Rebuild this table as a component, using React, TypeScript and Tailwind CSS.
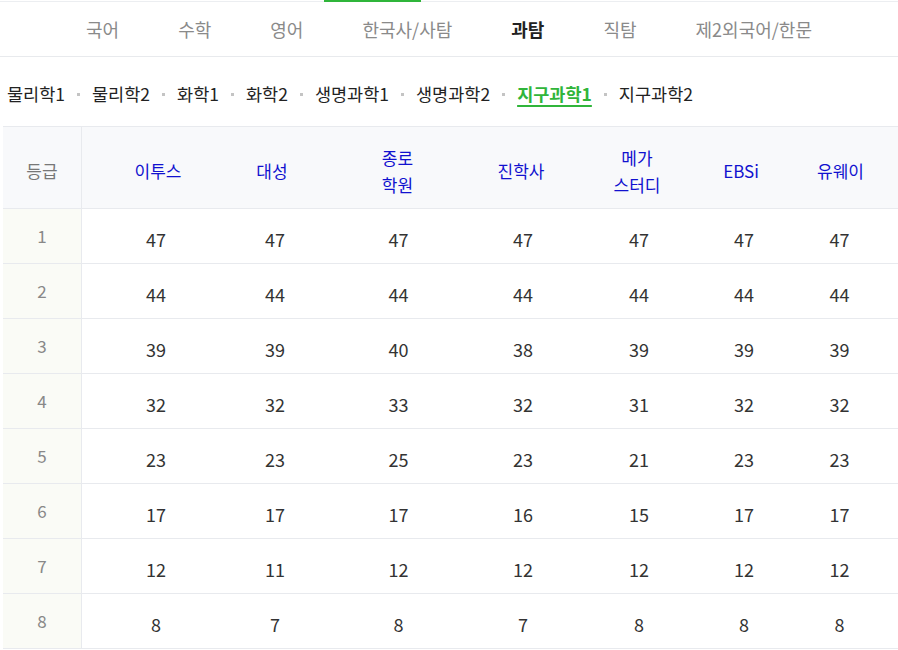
import React from 'react';

const tabs = ['국어', '수학', '영어', '한국사/사탐', '과탐', '직탐', '제2외국어/한문'];
const activeTab = '과탐';

const subjects = ['물리학1', '물리학2', '화학1', '화학2', '생명과학1', '생명과학2', '지구과학1', '지구과학2'];
const activeSubject = '지구과학1';

const headers: { lines: string[]; cls: string }[] = [
  { lines: ['이투스'], cls: 'pl-[20px]' },
  { lines: ['대성'], cls: 'pr-[4px]' },
  { lines: ['종로', '학원'], cls: 'pl-[2px]' },
  { lines: ['진학사'], cls: 'pl-[4px]' },
  { lines: ['메가', '스터디'], cls: 'pl-[6px]' },
  { lines: ['EBSi'], cls: 'pl-[2px]' },
  { lines: ['유웨이'], cls: 'pr-[8px]' },
];

const rows: number[][] = [
  [47, 47, 47, 47, 47, 47, 47],
  [44, 44, 44, 44, 44, 44, 44],
  [39, 39, 40, 38, 39, 39, 39],
  [32, 32, 33, 32, 31, 32, 32],
  [23, 23, 25, 23, 21, 23, 23],
  [17, 17, 17, 16, 15, 17, 17],
  [12, 11, 12, 12, 12, 12, 12],
  [8, 7, 8, 7, 8, 8, 8],
];

// per-column nudges so numbers sit where the header does
const cellShift = ['pl-[16px]', 'pl-[2px]', 'pl-[4px]', 'pl-[8px]', 'pl-[10px]', 'pl-[8px]', 'pr-[10px]'];

const font = 'font-["Noto_Sans_CJK_KR","Noto_Sans",sans-serif]';

export default function App() {
  return (
    <div className={`w-[898px] h-[650px] bg-white overflow-hidden ${font}`}>
      {/* outer indicator strip */}
      <div className="h-[2px] border-b border-[#eceef1]">
        <div className="ml-[324px] w-[97px] h-[2px] bg-[#2fb53a]" />
      </div>

      {/* main tabs */}
      <div className="h-[55px] flex items-center justify-center gap-[59px] border-b border-[#e8eaed]">
        {tabs.map((t) => (
          <span
            key={t}
            className={
              t === activeTab
                ? 'text-[18px] font-bold text-[#222]'
                : 'text-[18px] text-[#8a8a8a]'
            }
          >
            {t}
          </span>
        ))}
      </div>

      {/* subject list */}
      <div className="h-[69px] flex items-center pl-[7px] pt-[6px]">
        {subjects.map((s, i) => (
          <React.Fragment key={s}>
            {i > 0 && <span className="mx-[12px] w-[3px] h-[3px] bg-[#c4c4c4]" />}
            <span
              className={
                s === activeSubject
                  ? 'text-[17.5px] font-bold text-[#30b53a] underline underline-offset-[4px] decoration-2'
                  : 'text-[17.5px] text-[#222]'
              }
            >
              {s}
            </span>
          </React.Fragment>
        ))}
      </div>

      {/* score table */}
      <div className="ml-[3px] border-t border-[#e8eaee]">
        <div className="grid grid-cols-[79px_132px_120px_125px_120px_110px_102px_107px]">
          <div className="h-[82px] bg-[#f8f9fb] border-r border-b border-[#e8eaee] flex items-center justify-center pt-[6px] text-[17px] text-[#777]">
            등급
          </div>
          {headers.map((h) => (
            <div
              key={h.lines.join('')}
              className={`h-[82px] bg-[#f8f9fb] border-b border-[#e8eaee] flex flex-col items-center justify-center pt-[6px] text-[17px] leading-[27px] text-[#1111cf] ${h.cls}`}
            >
              {h.lines.map((l) => (
                <span key={l}>{l}</span>
              ))}
            </div>
          ))}

          {rows.map((r, ri) => (
            <React.Fragment key={ri}>
              <div className="h-[55px] bg-[#fafbf6] border-r border-b border-[#e8eaee] flex items-center justify-center text-[17px] text-[#888]">
                {ri + 1}
              </div>
              {r.map((v, ci) => (
                <div
                  key={ci}
                  className={`h-[55px] border-b border-[#e8eaee] flex items-center justify-center pt-[6px] text-[18px] text-[#333] ${cellShift[ci]}`}
                >
                  {v}
                </div>
              ))}
            </React.Fragment>
          ))}
        </div>
      </div>
    </div>
  );
}
